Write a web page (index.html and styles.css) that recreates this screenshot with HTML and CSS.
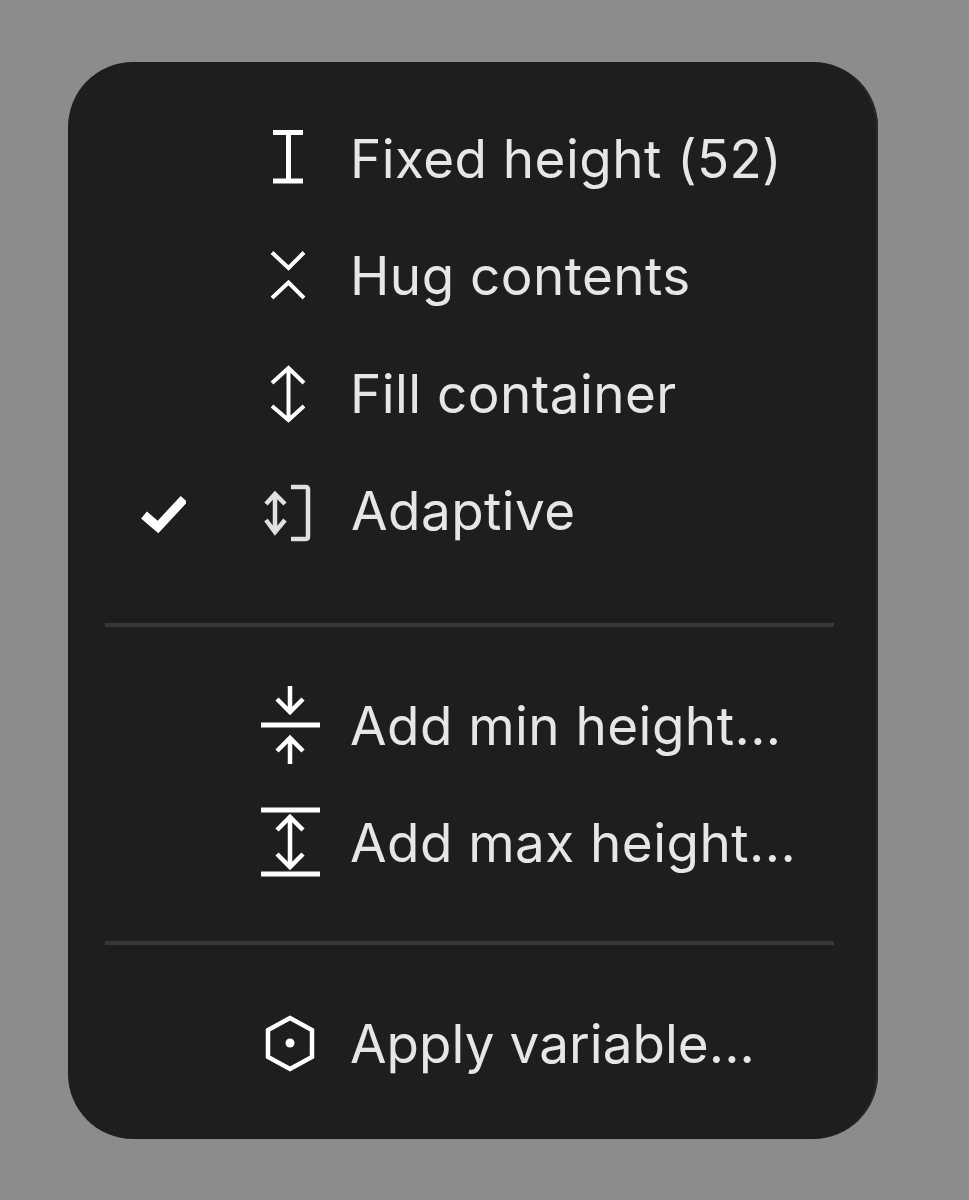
FILE: index.html
```html
<html>
    <head>
        <meta charset="utf-8">
        <title>Height menu</title>
        <link rel="stylesheet" href="styles.css">
    </head>
    <body class="body">
        <div class="menu">
            <div class="item">
                <span class="check"></span>
                <svg class="icon" viewBox="0 0 80 80"><path d="M24 13.5H54M24 62H54M39.5 13.5V62" stroke-width="5"/></svg>
                <span class="label">Fixed height (52)</span>
            </div>
            <div class="item">
                <span class="check"></span>
                <svg class="icon" viewBox="0 0 80 80"><path d="M23 16.5L39.5 32L55 16.5M23 62L39.5 46.5L55 62" stroke-width="4"/></svg>
                <span class="label">Hug contents</span>
            </div>
            <div class="item">
                <span class="check"></span>
                <svg class="icon" viewBox="0 0 80 80"><path d="M39.5 15V65M23 29L39.5 14L55 29M23 52L39.5 66L55 52" stroke-width="4"/></svg>
                <span class="label">Fill container</span>
            </div>
            <div class="item">
                <svg class="check" viewBox="0 0 56 56"><path d="M14 32L28 44L54 16" stroke-width="9"/></svg>
                <svg class="icon dim" viewBox="0 0 80 80"><path d="M26 23V61M17 33L26 23L36 33M17 49L26 61L36 49" stroke-width="4.500"/><path d="M42 16H56.500Q59 16 59 18.500V65.500Q59 68 56.500 68H42" stroke-width="4.500"/></svg>
                <span class="label label-adaptive">Adaptive</span>
            </div>
            <div class="line"></div>
            <div class="item">
                <span class="check"></span>
                <svg class="icon" viewBox="0 0 80 80"><path d="M41 0V25M28 13L41 26L54 13M41 52V78M28 65L41 52L54 65" stroke-width="4.500"/><path d="M12 39H71" stroke-width="5"/></svg>
                <span class="label">Add min height...</span>
            </div>
            <div class="item">
                <span class="check"></span>
                <svg class="icon" viewBox="0 0 80 80"><path d="M41 14V64M28 27L41 14L54 27M28 51L41 64L54 51" stroke-width="4.500"/><path d="M12 7H71M12 71H71" stroke-width="5"/></svg>
                <span class="label">Add max height...</span>
            </div>
            <div class="line line2"></div>
            <div class="item">
                <span class="check"></span>
                <svg class="icon" viewBox="0 0 80 80"><path d="M41 14L63 26V53L41 65L19 53V26Z" stroke-width="4.500"/><circle class="dot" cx="41" cy="39" r="4.500"/></svg>
                <span class="label label-apply">Apply variable...</span>
            </div>
        </div>
    </body>
</html>
```
FILE: styles.css
```css
.body{
    margin:0;
    padding:62px 0 0 68px;
    background-color:#8c8c8c;
    font-family:"Inter","Liberation Sans",sans-serif;
}

.menu{
    box-sizing:border-box;
    width:810px;
    height:1077px;
    padding:38px 44px 37px 0;
    background-color:#1e1e1e;
    border-radius:65px;
    box-shadow:inset -3px 0 2px -1px #2c2c2c;
}
.item{
    display:flex;
    align-items:center;
    height:117.5px;
    padding-left:62px;
}
.check{
    width:56px;
    height:56px;
    margin-right:63px;
    flex:none;
}
.icon{
    width:80px;
    height:80px;
    margin-right:21px;
    flex:none;
    overflow:visible;
}
.check path, .icon path{
    fill:none;
    stroke:#fff;
}
.dim path{
    stroke:#e0e0e0;
}
.dot{
    fill:#fff;
}
.label{
    font-size:53px;
    letter-spacing:0.45px;
    color:#e6e6e6;
    white-space:nowrap;
}
.label-adaptive{
    margin-left:1px;
}
.label-apply{
    letter-spacing:0.05px;
}
.line{
    height:4px;
    margin:53px 0 40px 37px;
    background-color:#383838;
}
.line2{
    margin:39px 0 40px 37px;
}
```
